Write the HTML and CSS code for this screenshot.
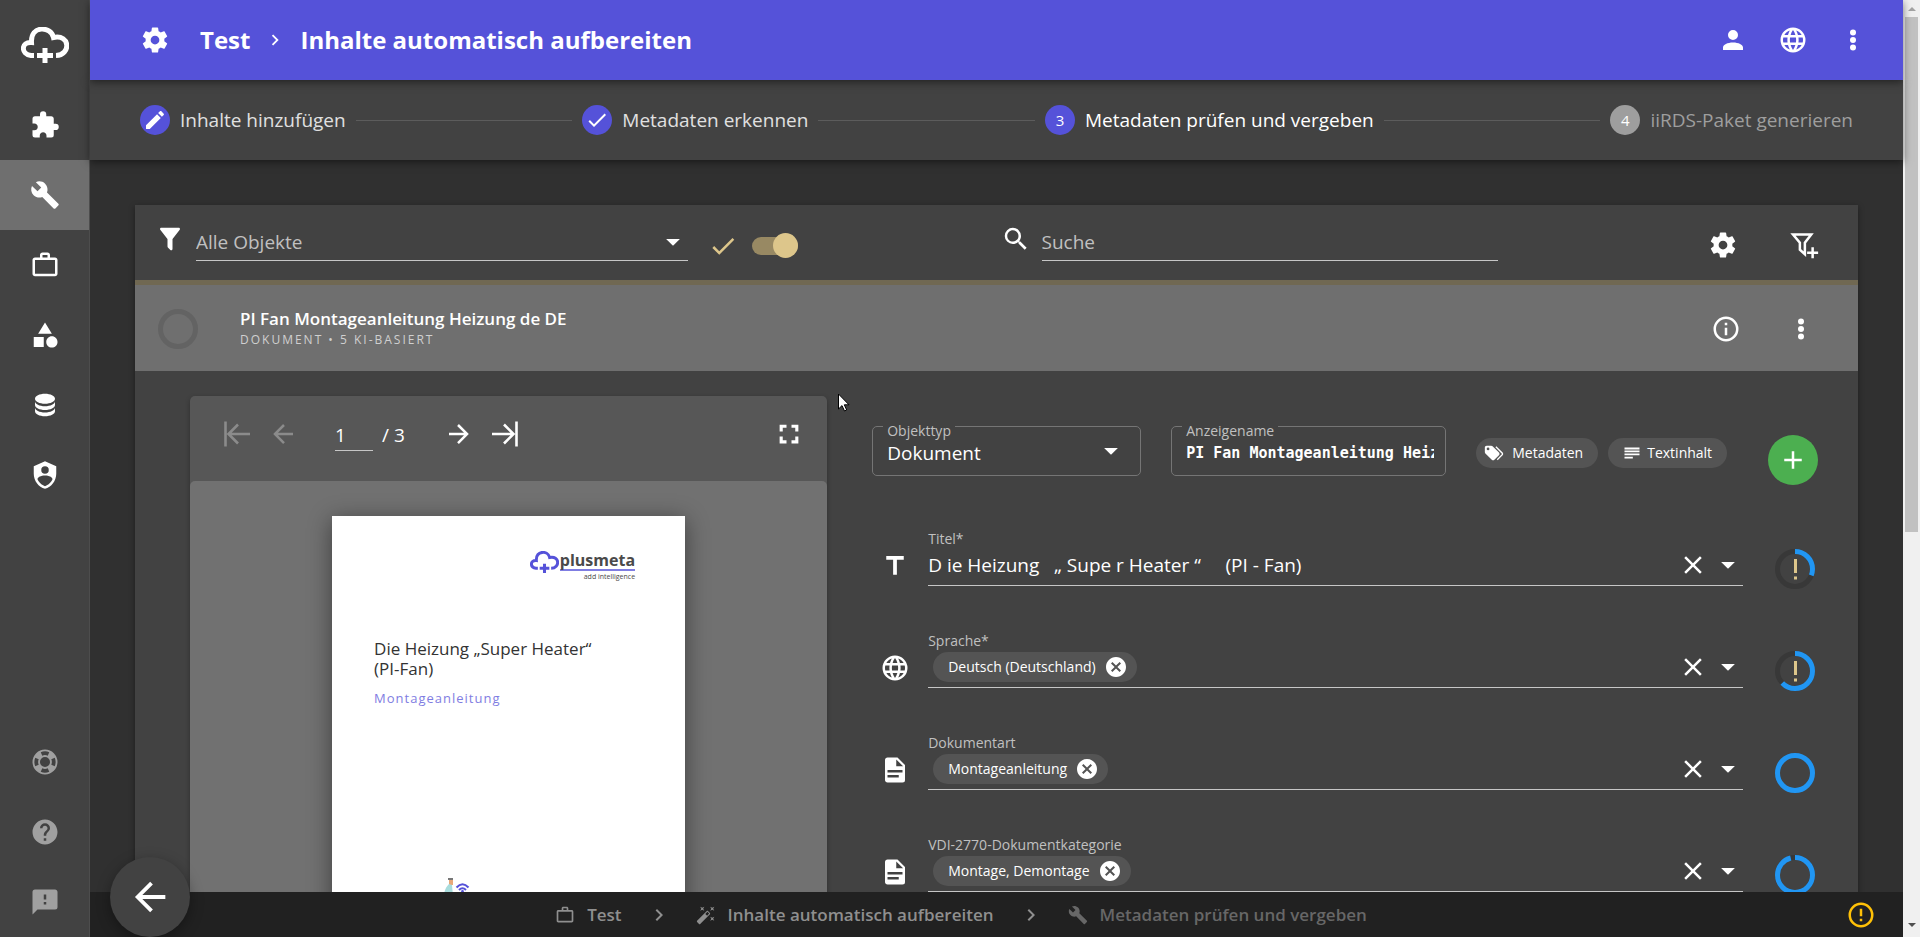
FILE: index.html
```html
<!DOCTYPE html>
<html lang="de">
<head>
<meta charset="utf-8">
<title>Inhalte automatisch aufbereiten</title>
<link rel="stylesheet" href="styles.css">
</head>
<body>
<svg class="sprite" aria-hidden="true">
  <symbol id="cloud" viewBox="0 0 48 36"><path fill="none" stroke="currentColor" stroke-width="5" d="M13 28.500H10C-.5 27 0 14.500 10.500 15.500C9.500-2 30-1 32.500 10.500C49.500 7 50 28 35 28.500"/><path fill="none" stroke="currentColor" stroke-width="5" d="M24 21V36M16 28.500H32"/></symbol>
  <symbol id="cog" viewBox="0 0 24 24"><path d="M12,15.5A3.5,3.5 0 0,1 8.5,12A3.5,3.5 0 0,1 12,8.5A3.5,3.5 0 0,1 15.5,12A3.5,3.5 0 0,1 12,15.5M19.43,12.97C19.47,12.65 19.5,12.33 19.5,12C19.5,11.67 19.47,11.34 19.43,11L21.54,9.37C21.73,9.22 21.78,8.95 21.66,8.73L19.66,5.27C19.54,5.05 19.27,4.96 19.05,5.05L16.56,6.05C16.04,5.66 15.5,5.32 14.87,5.07L14.5,2.42C14.46,2.18 14.25,2 14,2H10C9.75,2 9.54,2.18 9.5,2.42L9.13,5.07C8.5,5.32 7.96,5.66 7.44,6.05L4.95,5.05C4.73,4.96 4.46,5.05 4.34,5.27L2.34,8.73C2.21,8.95 2.27,9.22 2.46,9.37L4.57,11C4.53,11.34 4.5,11.67 4.5,12C4.5,12.33 4.53,12.65 4.57,12.97L2.46,14.63C2.27,14.78 2.21,15.05 2.34,15.27L4.34,18.73C4.46,18.95 4.73,19.03 4.95,18.95L7.44,17.94C7.96,18.34 8.5,18.68 9.13,18.93L9.5,21.58C9.54,21.82 9.75,22 10,22H14C14.25,22 14.46,21.82 14.5,21.58L14.87,18.93C15.5,18.67 16.04,18.34 16.56,17.94L19.05,18.95C19.27,19.03 19.54,18.95 19.66,18.73L21.66,15.27C21.78,15.05 21.73,14.78 21.54,14.63L19.43,12.97Z"/></symbol>
  <symbol id="puzzle" viewBox="0 0 24 24"><path d="M20.5,11H19V7C19,5.89 18.1,5 17,5H13V3.5A2.5,2.5 0 0,0 10.5,1A2.5,2.5 0 0,0 8,3.5V5H4A2,2 0 0,0 2,7V10.8H3.5C5,10.8 6.2,12 6.2,13.5C6.2,15 5,16.2 3.5,16.2H2V20A2,2 0 0,0 4,22H7.8V20.5C7.8,19 9,17.8 10.5,17.8C12,17.8 13.2,19 13.2,20.5V22H17A2,2 0 0,0 19,20V16H20.5A2.5,2.5 0 0,0 23,13.5A2.5,2.5 0 0,0 20.5,11Z"/></symbol>
  <symbol id="wrench" viewBox="0 0 24 24"><path d="M22.7,19L13.6,9.9C14.5,7.6 14,4.9 12.1,3C10.1,1 7.1,0.6 4.7,1.7L9,6L6,9L1.6,4.7C0.4,7.1 0.9,10.1 2.9,12.1C4.8,14 7.5,14.5 9.8,13.6L18.9,22.7C19.3,23.1 19.9,23.1 20.3,22.7L22.6,20.4C23.1,20 23.1,19.3 22.7,19Z"/></symbol>
  <symbol id="briefcase" viewBox="0 0 24 24"><path d="M20,6C20.58,6 21.05,6.2 21.42,6.59C21.8,7 22,7.45 22,8V19C22,19.55 21.8,20 21.42,20.41C21.05,20.8 20.58,21 20,21H4C3.42,21 2.95,20.8 2.58,20.41C2.2,20 2,19.55 2,19V8C2,7.45 2.2,7 2.58,6.59C2.95,6.2 3.42,6 4,6H8V4C8,3.42 8.2,2.95 8.58,2.58C8.95,2.2 9.42,2 10,2H14C14.58,2 15.05,2.2 15.42,2.58C15.8,2.95 16,3.42 16,4V6H20M4,8V19H20V8H4M14,6V4H10V6H14Z"/></symbol>
  <symbol id="shapes" viewBox="0 0 24 24"><path d="M11,13.5V21.5H3V13.5H11M12,2L17.5,11H6.5L12,2M17.5,13C20,13 22,15 22,17.5C22,20 20,22 17.5,22C15,22 13,20 13,17.5C13,15 15,13 17.5,13Z"/></symbol>
  <symbol id="database" viewBox="0 0 24 24"><path d="M12,3C7.58,3 4,4.79 4,7C4,9.21 7.58,11 12,11C16.42,11 20,9.21 20,7C20,4.79 16.42,3 12,3M4,9V12C4,14.21 7.58,16 12,16C16.42,16 20,14.21 20,12V9C20,11.21 16.42,13 12,13C7.58,13 4,11.21 4,9M4,14V17C4,19.21 7.58,21 12,21C16.42,21 20,19.21 20,17V14C20,16.21 16.42,18 12,18C7.58,18 4,16.21 4,14Z"/></symbol>
  <symbol id="shield" viewBox="0 0 24 24"><path d="M12,1L3,5V11C3,16.55 6.84,21.74 12,23C17.16,21.74 21,16.55 21,11V5L12,1M12,5A3,3 0 0,1 15,8A3,3 0 0,1 12,11A3,3 0 0,1 9,8A3,3 0 0,1 12,5M17.13,17C15.92,18.85 14.11,20.24 12,20.92C9.89,20.24 8.08,18.85 6.87,17C6.53,16.5 6.24,16 6,15.47C6,13.82 8.71,12.47 12,12.47C15.29,12.47 18,13.79 18,15.47C17.76,16 17.47,16.5 17.13,17Z"/></symbol>
  <symbol id="lifebuoy" viewBox="0 0 24 24"><path d="M19.79,15.41C20.74,13.24 20.74,10.75 19.79,8.59L17.05,9.83C17.65,11.21 17.65,12.78 17.06,14.17L19.79,15.41M15.42,4.21C13.25,3.26 10.76,3.26 8.59,4.21L9.83,6.94C11.22,6.35 12.79,6.35 14.18,6.95L15.42,4.21M4.21,8.58C3.26,10.76 3.26,13.24 4.21,15.42L6.95,14.17C6.35,12.79 6.35,11.21 6.95,9.82L4.21,8.58M8.59,19.79C10.76,20.74 13.25,20.74 15.42,19.78L14.18,17.05C12.8,17.65 11.22,17.65 9.84,17.06L8.59,19.79M12,2A10,10 0 0,1 22,12A10,10 0 0,1 12,22A10,10 0 0,1 2,12A10,10 0 0,1 12,2M12,8A4,4 0 0,0 8,12A4,4 0 0,0 12,16A4,4 0 0,0 16,12A4,4 0 0,0 12,8Z"/></symbol>
  <symbol id="help" viewBox="0 0 24 24"><path d="M15.07,11.25L14.17,12.17C13.45,12.89 13,13.5 13,15H11V14.5C11,13.39 11.45,12.39 12.17,11.67L13.41,10.41C13.78,10.05 14,9.55 14,9C14,7.89 13.1,7 12,7A2,2 0 0,0 10,9H8A4,4 0 0,1 12,5A4,4 0 0,1 16,9C16,9.88 15.64,10.67 15.07,11.25M13,19H11V17H13M12,2A10,10 0 0,0 2,12A10,10 0 0,0 12,22A10,10 0 0,0 22,12C22,6.47 17.5,2 12,2Z"/></symbol>
  <symbol id="message" viewBox="0 0 24 24"><path d="M13,10H11V6H13M13,14H11V12H13M20,2H4A2,2 0 0,0 2,4V22L6,18H20A2,2 0 0,0 22,16V4C22,2.89 21.1,2 20,2Z"/></symbol>
  <symbol id="account" viewBox="0 0 24 24"><path d="M12,4A4,4 0 0,1 16,8A4,4 0 0,1 12,12A4,4 0 0,1 8,8A4,4 0 0,1 12,4M12,14C16.42,14 20,15.79 20,18V20H4V18C4,15.79 7.58,14 12,14Z"/></symbol>
  <symbol id="web" viewBox="0 0 24 24"><path d="M16.36,14C16.44,13.34 16.5,12.68 16.5,12C16.5,11.32 16.44,10.66 16.36,10H19.74C19.9,10.64 20,11.31 20,12C20,12.69 19.9,13.36 19.74,14M14.59,19.56C15.19,18.45 15.65,17.25 15.97,16H18.92C17.96,17.65 16.43,18.93 14.59,19.56M14.34,14H9.66C9.56,13.34 9.5,12.68 9.5,12C9.5,11.32 9.56,10.65 9.66,10H14.34C14.43,10.65 14.5,11.32 14.5,12C14.5,12.68 14.43,13.34 14.34,14M12,19.96C11.17,18.76 10.5,17.43 10.09,16H13.91C13.5,17.43 12.83,18.76 12,19.96M8,8H5.08C6.03,6.34 7.57,5.06 9.4,4.44C8.8,5.55 8.35,6.75 8,8M5.08,16H8C8.35,17.25 8.8,18.45 9.4,19.56C7.57,18.93 6.03,17.65 5.08,16M4.26,14C4.1,13.36 4,12.69 4,12C4,11.31 4.1,10.64 4.26,10H7.64C7.56,10.66 7.5,11.32 7.5,12C7.5,12.68 7.56,13.34 7.64,14M12,4.03C12.83,5.23 13.5,6.57 13.91,8H10.09C10.5,6.57 11.17,5.23 12,4.03M18.92,8H15.97C15.65,6.75 15.19,5.55 14.59,4.44C16.43,5.07 17.96,6.34 18.92,8M12,2C6.47,2 2,6.5 2,12A10,10 0 0,0 12,22A10,10 0 0,0 22,12A10,10 0 0,0 12,2Z"/></symbol>
  <symbol id="dots" viewBox="0 0 24 24"><circle cx="12" cy="6" r="2.400"/><circle cx="12" cy="12" r="2.400"/><circle cx="12" cy="18" r="2.400"/></symbol>
  <symbol id="chevron" viewBox="0 0 24 24"><path d="M8.59,16.58L13.17,12L8.59,7.41L10,6L16,12L10,18L8.59,16.58Z"/></symbol>
  <symbol id="filter" viewBox="0 0 24 24"><path d="M14,12V19.88C14.04,20.18 13.94,20.5 13.71,20.71C13.32,21.1 12.69,21.1 12.3,20.71L10.29,18.7C10.06,18.47 9.96,18.16 10,17.87V12H9.97L4.21,4.62C3.87,4.19 3.95,3.56 4.38,3.22C4.57,3.08 4.78,3 5,3H19C19.22,3 19.43,3.08 19.62,3.22C20.05,3.56 20.13,4.19 19.79,4.62L14.03,12H14Z"/></symbol>
  <symbol id="filter-plus" viewBox="0 0 24 24"><path fill="none" stroke="currentColor" stroke-width="2" d="M3.200 3.600H17.800L12.700 10.200V19.400L8.700 15.800V10.200ZM18.900 13.700V22.500M14.500 18.100H23.300"/></symbol>
  <symbol id="magnify" viewBox="0 0 24 24"><path d="M9.5,3A6.5,6.5 0 0,1 16,9.5C16,11.11 15.41,12.59 14.44,13.73L14.71,14H15.5L20.5,19L19,20.5L14,15.5V14.71L13.73,14.44C12.59,15.41 11.11,16 9.5,16A6.5,6.5 0 0,1 3,9.5A6.5,6.5 0 0,1 9.5,3M9.5,5C7,5 5,7 5,9.5C5,12 7,14 9.5,14C12,14 14,12 14,9.5C14,7 12,5 9.5,5Z"/></symbol>
  <symbol id="arrow-left" viewBox="0 0 24 24"><path d="M20,11V13H8L13.5,18.5L12.08,19.92L4.16,12L12.08,4.08L13.5,5.5L8,11H20Z"/></symbol>
  <symbol id="arrow-right" viewBox="0 0 24 24"><path d="M4,11V13H16L10.5,18.5L11.92,19.92L19.84,12L11.92,4.08L10.5,5.5L16,11H4Z"/></symbol>
  <symbol id="page-first" viewBox="0 0 30 30"><path fill="none" stroke="currentColor" stroke-width="2.600" d="M3.500 2.500V27.500M28 15H7M16 5.500L6.500 15L16 24.500"/></symbol>
  <symbol id="page-last" viewBox="0 0 30 30"><path fill="none" stroke="currentColor" stroke-width="2.600" d="M26.500 2.500V27.500M2 15H23M14 5.500L23.500 15L14 24.500"/></symbol>
  <symbol id="pencil" viewBox="0 0 24 24"><path d="M20.71,7.04C21.1,6.65 21.1,6 20.71,5.63L18.37,3.29C18,2.9 17.35,2.9 16.96,3.29L15.12,5.12L18.87,8.87M3,17.25V21H6.75L17.81,9.93L14.06,6.18L3,17.25Z"/></symbol>
  <symbol id="check" viewBox="0 0 24 24"><path d="M21,7L9,19L3.5,13.5L4.91,12.09L9,16.17L19.59,5.59L21,7Z"/></symbol>
  <symbol id="info" viewBox="0 0 24 24"><path d="M11,9H13V7H11M12,20C7.59,20 4,16.41 4,12C4,7.59 7.59,4 12,4C16.41,4 20,7.59 20,12C20,16.41 16.41,20 12,20M12,2A10,10 0 0,0 2,12A10,10 0 0,0 12,22A10,10 0 0,0 22,12A10,10 0 0,0 12,2M11,17H13V11H11V17Z"/></symbol>
  <symbol id="alert" viewBox="0 0 24 24"><path d="M11,15H13V17H11V15M11,7H13V13H11V7M12,20C7.59,20 4,16.41 4,12C4,7.59 7.59,4 12,4C16.41,4 20,7.59 20,12C20,16.41 16.41,20 12,20M12,2A10,10 0 0,0 2,12A10,10 0 0,0 12,22A10,10 0 0,0 22,12A10,10 0 0,0 12,2Z"/></symbol>
  <symbol id="close-circle" viewBox="0 0 24 24"><path d="M12,2C17.53,2 22,6.47 22,12C22,17.53 17.53,22 12,22C6.47,22 2,17.53 2,12C2,6.47 6.47,2 12,2M15.59,7L12,10.59L8.41,7L7,8.41L10.59,12L7,15.59L8.41,17L12,13.41L15.59,17L17,15.59L13.41,12L17,8.41L15.59,7Z"/></symbol>
  <symbol id="close" viewBox="0 0 24 24"><path d="M19,6.41L17.59,5L12,10.59L6.41,5L5,6.41L10.59,12L5,17.59L6.41,19L12,13.41L17.59,19L19,17.59L13.41,12L19,6.41Z"/></symbol>
  <symbol id="caret" viewBox="0 0 24 24"><path d="M6.500,9.500H17.500L12,15Z"/></symbol>
  <symbol id="title" viewBox="0 0 24 24"><path d="M5,4V7H10.5V19H13.5V7H19V4H5Z"/></symbol>
  <symbol id="file" viewBox="0 0 24 24"><path d="M13,9H18.5L13,3.5V9M6,2H14L20,8V20A2,2 0 0,1 18,22H6C4.89,22 4,21.1 4,20V4C4,2.89 4.89,2 6,2M15,18V16H6V18H15M18,14V12H6V14H18Z"/></symbol>
  <symbol id="tags" viewBox="0 0 24 24"><path d="M5.5,9A1.5,1.5 0 0,0 7,7.5A1.5,1.5 0 0,0 5.5,6A1.5,1.5 0 0,0 4,7.5A1.5,1.5 0 0,0 5.5,9M17.41,11.58C17.77,11.94 18,12.44 18,13C18,13.55 17.78,14.05 17.41,14.41L12.41,19.41C12.05,19.77 11.55,20 11,20C10.45,20 9.95,19.78 9.58,19.41L2.59,12.42C2.22,12.05 2,11.55 2,11V6C2,4.89 2.89,4 4,4H9C9.55,4 10.05,4.22 10.41,4.58L17.41,11.58M13.54,5.71L14.54,4.71L21.41,11.58C21.78,11.94 22,12.45 22,13C22,13.55 21.78,14.05 21.42,14.41L16.04,19.79L15.04,18.79L20.75,13L13.54,5.71Z"/></symbol>
  <symbol id="text" viewBox="0 0 24 24"><path d="M3 5.500H21V7.700H3ZM3 9H21V11.200H3ZM3 12.500H21V14.700H3ZM3 16.500H13V18.700H3Z"/></symbol>
  <symbol id="plus" viewBox="0 0 24 24"><path d="M19,13H13V19H11V13H5V11H11V5H13V11H19V13Z"/></symbol>
  <symbol id="fullscreen" viewBox="0 0 24 24"><path d="M4.500,4.500H10V7H7V10H4.500V4.500M14,4.500H19.500V10H17V7H14V4.500M17,14H19.500V19.500H14V17H17V14M10,17V19.500H4.500V14H7V17H10Z"/></symbol>
  <symbol id="wand" viewBox="0 0 24 24"><path d="M7.5,5.6L5,7L6.4,4.5L5,2L7.5,3.4L10,2L8.6,4.5L10,7L7.5,5.6M19.5,15.4L22,14L20.6,16.5L22,19L19.5,17.6L17,19L18.4,16.5L17,14L19.5,15.4M22,2L20.6,4.5L22,7L19.5,5.6L17,7L18.4,4.5L17,2L19.5,3.4L22,2M13.34,12.78L15.78,10.34L13.66,8.22L11.22,10.66L13.34,12.78M14.37,7.29L16.71,9.63C17.1,10 17.1,10.65 16.71,11.04L5.04,22.71C4.65,23.1 4,23.1 3.63,22.71L1.29,20.37C0.9,20 0.9,19.35 1.29,18.96L12.96,7.29C13.35,6.9 14,6.9 14.37,7.29Z"/></symbol>
</svg>

<div class="app">
  <nav class="sidebar" aria-label="Hauptmenü">
    <a class="brand" href="#" aria-label="plusmeta"><svg class="brand-logo"><use href="#cloud"/></svg></a>
    <a class="nav-item" href="#" aria-label="Erweiterungen"><svg class="icon"><use href="#puzzle"/></svg></a>
    <a class="nav-item active" href="#" aria-label="Werkzeuge"><svg class="icon"><use href="#wrench"/></svg></a>
    <a class="nav-item" href="#" aria-label="Projekte"><svg class="icon"><use href="#briefcase"/></svg></a>
    <a class="nav-item" href="#" aria-label="Objekte"><svg class="icon"><use href="#shapes"/></svg></a>
    <a class="nav-item" href="#" aria-label="Daten"><svg class="icon"><use href="#database"/></svg></a>
    <a class="nav-item" href="#" aria-label="Verwaltung"><svg class="icon"><use href="#shield"/></svg></a>
    <div class="nav-foot">
      <a class="nav-item muted" href="#" aria-label="Support"><svg class="icon"><use href="#lifebuoy"/></svg></a>
      <a class="nav-item muted" href="#" aria-label="Hilfe"><svg class="icon"><use href="#help"/></svg></a>
      <a class="nav-item muted" href="#" aria-label="Feedback"><svg class="icon"><use href="#message"/></svg></a>
    </div>
  </nav>

  <div class="main">
    <header class="topbar">
      <button class="icon-btn" aria-label="Einstellungen"><svg class="icon"><use href="#cog"/></svg></button>
      <h1 class="crumb-title"><a href="#">Test</a><svg class="crumb-arrow"><use href="#chevron"/></svg><span>Inhalte automatisch aufbereiten</span></h1>
      <div class="top-actions">
        <button class="icon-btn" aria-label="Konto"><svg class="icon"><use href="#account"/></svg></button>
        <button class="icon-btn" aria-label="Sprache wählen"><svg class="icon"><use href="#web"/></svg></button>
        <button class="icon-btn" aria-label="Mehr"><svg class="icon"><use href="#dots"/></svg></button>
      </div>
    </header>

    <ol class="stepper">
      <li class="step"><span class="badge"><svg class="icon-b"><use href="#pencil"/></svg></span>Inhalte hinzufügen</li>
      <li class="rule" aria-hidden="true"></li>
      <li class="step"><span class="badge"><svg class="icon-b"><use href="#check"/></svg></span>Metadaten erkennen</li>
      <li class="rule" aria-hidden="true"></li>
      <li class="step current"><span class="badge">3</span>Metadaten prüfen und vergeben</li>
      <li class="rule" aria-hidden="true"></li>
      <li class="step todo"><span class="badge">4</span>iiRDS-Paket generieren</li>
    </ol>

    <main class="content">
      <section class="card">
        <div class="filters">
          <div class="filter-left">
            <svg class="icon lead"><use href="#filter"/></svg>
            <div class="line-field">
              <select class="plain" aria-label="Objektfilter"><option>Alle Objekte</option></select>
              <svg class="icon"><use href="#caret"/></svg>
            </div>
            <svg class="icon gold"><use href="#check"/></svg>
            <input class="switch" type="checkbox" checked aria-label="Nur geprüfte">
          </div>
          <div class="filter-right">
            <svg class="icon lead"><use href="#magnify"/></svg>
            <div class="line-field"><input class="plain" type="text" placeholder="Suche" aria-label="Suche"></div>
            <button class="icon-btn" aria-label="Einstellungen"><svg class="icon"><use href="#cog"/></svg></button>
            <button class="icon-btn" aria-label="Filter hinzufügen"><svg class="icon"><use href="#filter-plus"/></svg></button>
          </div>
        </div>

        <div class="item-head">
          <span class="item-ring"></span>
          <div class="item-text">
            <h2>PI Fan Montageanleitung Heizung de DE</h2>
            <p>DOKUMENT • 5 KI-BASIERT</p>
          </div>
          <button class="icon-btn" aria-label="Info"><svg class="icon"><use href="#info"/></svg></button>
          <button class="icon-btn" aria-label="Mehr"><svg class="icon"><use href="#dots"/></svg></button>
        </div>

        <div class="item-body">
          <div class="preview">
            <div class="pager">
              <button class="icon-btn" disabled aria-label="Erste Seite"><svg class="icon"><use href="#page-first"/></svg></button>
              <button class="icon-btn" disabled aria-label="Vorige Seite"><svg class="icon"><use href="#arrow-left"/></svg></button>
              <input class="page-no" type="text" value="1" aria-label="Seite">
              <span class="page-count">/ 3</span>
              <button class="icon-btn" aria-label="Nächste Seite"><svg class="icon"><use href="#arrow-right"/></svg></button>
              <button class="icon-btn" aria-label="Letzte Seite"><svg class="icon"><use href="#page-last"/></svg></button>
              <button class="icon-btn full" aria-label="Vollbild"><svg class="icon"><use href="#fullscreen"/></svg></button>
            </div>
            <div class="stage">
              <article class="sheet">
                <div class="sheet-logo">
                  <svg class="sheet-cloud"><use href="#cloud"/></svg>
                  <div class="sheet-brand"><strong>plusmeta</strong><small>add intelligence</small></div>
                </div>
                <h3>Die Heizung „Super Heater“<br>(PI-Fan)</h3>
                <p>Montageanleitung</p>
                <svg class="sheet-art" viewBox="0 0 30 60" aria-hidden="true">
                  <path fill="#e8a878" d="M6 2h4v5H6z"/><path fill="#777" d="M5 0h5v2H5z"/>
                  <path fill="#a8dcdc" d="M6 6C3 9 1 13 1 18V60H10V18L9 7z"/>
                  <path fill="none" stroke="#5552d9" stroke-width="2" d="M13.500 9.500Q19.500 3 25.500 9.500M16 12Q19.500 8.500 23 12"/><circle cx="19.500" cy="13.500" r="1.400" fill="#5552d9"/>
                </svg>
              </article>
            </div>
          </div>

          <form class="form">
            <div class="form-top">
              <div class="outlined type">
                <label for="otype">Objekttyp</label>
                <select class="plain" id="otype"><option>Dokument</option></select>
                <svg class="icon"><use href="#caret"/></svg>
              </div>
              <div class="outlined name">
                <label for="oname">Anzeigename</label>
                <input class="plain mono" id="oname" type="text" value="PI Fan Montageanleitung Heizung de DE">
              </div>
              <div class="chips">
                <button class="chip action" type="button"><svg class="icon-s"><use href="#tags"/></svg>Metadaten</button>
                <button class="chip action wide" type="button"><svg class="icon-xs"><use href="#text"/></svg>Textinhalt</button>
              </div>
              <button class="fab" type="button" aria-label="Hinzufügen"><svg class="icon"><use href="#plus"/></svg></button>
            </div>

            <div class="row">
              <svg class="icon"><use href="#title"/></svg>
              <div class="field">
                <label for="f1">Titel*</label>
                <div class="control">
                  <input class="plain value" id="f1" type="text" value="D ie Heizung   „ Supe r Heater “     (PI - Fan)">
                  <button class="icon-btn" type="button" aria-label="Leeren"><svg class="icon"><use href="#close"/></svg></button>
                  <button class="drop" type="button" aria-label="Öffnen"><svg class="icon"><use href="#caret"/></svg></button>
                </div>
              </div>
              <svg class="ring" viewBox="0 0 40 40"><circle class="track" cx="20" cy="20" r="17.500"/><circle class="bar" cx="20" cy="20" r="17.500" pathLength="100" stroke-dasharray="31 100"/><path class="mark" d="M20.500 10V24M20.500 27.500V30.500"/></svg>
            </div>

            <div class="row">
              <svg class="icon"><use href="#web"/></svg>
              <div class="field">
                <label for="f2">Sprache*</label>
                <div class="control">
                  <span class="chip">Deutsch (Deutschland)<button class="chip-x" type="button" aria-label="Entfernen"><svg class="icon-m"><use href="#close-circle"/></svg></button></span>
                  <input class="plain value" id="f2" type="text">
                  <button class="icon-btn" type="button" aria-label="Leeren"><svg class="icon"><use href="#close"/></svg></button>
                  <button class="drop" type="button" aria-label="Öffnen"><svg class="icon"><use href="#caret"/></svg></button>
                </div>
              </div>
              <svg class="ring" viewBox="0 0 40 40"><circle class="track" cx="20" cy="20" r="17.500"/><circle class="bar" cx="20" cy="20" r="17.500" pathLength="100" stroke-dasharray="63 100"/><path class="mark" d="M20.500 10V24M20.500 27.500V30.500"/></svg>
            </div>

            <div class="row">
              <svg class="icon"><use href="#file"/></svg>
              <div class="field">
                <label for="f3">Dokumentart</label>
                <div class="control">
                  <span class="chip">Montageanleitung<button class="chip-x" type="button" aria-label="Entfernen"><svg class="icon-m"><use href="#close-circle"/></svg></button></span>
                  <input class="plain value" id="f3" type="text">
                  <button class="icon-btn" type="button" aria-label="Leeren"><svg class="icon"><use href="#close"/></svg></button>
                  <button class="drop" type="button" aria-label="Öffnen"><svg class="icon"><use href="#caret"/></svg></button>
                </div>
              </div>
              <svg class="ring" viewBox="0 0 40 40"><circle class="bar" cx="20" cy="20" r="17.500"/></svg>
            </div>

            <div class="row">
              <svg class="icon"><use href="#file"/></svg>
              <div class="field">
                <label for="f4">VDI-2770-Dokumentkategorie</label>
                <div class="control">
                  <span class="chip">Montage, Demontage<button class="chip-x" type="button" aria-label="Entfernen"><svg class="icon-m"><use href="#close-circle"/></svg></button></span>
                  <input class="plain value" id="f4" type="text">
                  <button class="icon-btn" type="button" aria-label="Leeren"><svg class="icon"><use href="#close"/></svg></button>
                  <button class="drop" type="button" aria-label="Öffnen"><svg class="icon"><use href="#caret"/></svg></button>
                </div>
              </div>
              <svg class="ring" viewBox="0 0 40 40"><circle class="track" cx="20" cy="20" r="17.500"/><circle class="bar" cx="20" cy="20" r="17.500" pathLength="100" stroke-dasharray="96 100"/></svg>
            </div>
          </form>
        </div>
      </section>
    </main>

    <footer class="footer">
      <nav class="trail" aria-label="Pfad">
        <a href="#"><svg class="icon-xs"><use href="#briefcase"/></svg>Test</a>
        <svg class="icon-m"><use href="#chevron"/></svg>
        <a href="#"><svg class="icon-xs"><use href="#wand"/></svg>Inhalte automatisch aufbereiten</a>
        <svg class="icon-m"><use href="#chevron"/></svg>
        <a class="here" href="#"><svg class="icon-xs"><use href="#wrench"/></svg>Metadaten prüfen und vergeben</a>
      </nav>
      <button class="icon-btn warn" aria-label="Hinweise"><svg class="icon"><use href="#alert"/></svg></button>
    </footer>
    <button class="back" aria-label="Zurück"><svg class="icon-l"><use href="#arrow-left"/></svg></button>
  </div>

  <div class="scrollbar" aria-hidden="true">
    <span class="arrow up"></span><span class="thumb"></span><span class="arrow down"></span>
  </div>
  <svg class="pointer" viewBox="0 0 12 19" aria-hidden="true"><path fill="#fff" stroke="#000" d="M.5 1V16L4 12.600L6.500 18L8.700 17L6.300 11.800H11Z"/></svg>
</div>
</body>
</html>
```
FILE: styles.css
```css
* { box-sizing: border-box; }

body {
  margin: 0;
  background: #303030;
  color: #fff;
  font: 19px/24px "Open Sans", "Noto Sans", sans-serif;
}

h1, h2, h3, p, ol { margin: 0; padding: 0; font-weight: inherit; }
a { color: inherit; text-decoration: none; }
svg { display: block; flex: none; fill: currentColor; }

button {
  flex: none;
  margin: 0;
  padding: 0;
  border: 0;
  background: none;
  color: inherit;
  font: inherit;
}

.sprite { position: absolute; width: 0; height: 0; }
.icon { width: 30px; height: 30px; }
.icon-xs { width: 20px; height: 20px; }
.icon-s { width: 22px; height: 22px; }
.icon-b { width: 24px; height: 24px; }
.icon-m { width: 24px; height: 24px; }
.icon-l { width: 46px; height: 46px; }

.plain {
  flex: 1;
  min-width: 0;
  width: 100%;
  margin: 0;
  padding: 0;
  border: 0;
  outline: 0;
  background: none;
  color: #fff;
  font: inherit;
  appearance: none;
}

.app { display: flex; height: 100vh; overflow: hidden; }

/* Sidebar */
.sidebar {
  flex: none;
  display: flex;
  flex-direction: column;
  width: 90px;
  border-right: 1px solid #4d4d4d;
  background: #424242;
}
.brand { display: flex; align-items: center; justify-content: center; height: 90px; }
.brand-logo { width: 48px; height: 36px; }
.nav-item { display: flex; align-items: center; justify-content: center; height: 70px; }
.nav-item.active { background: #6f6f6f; }
.nav-item.muted { color: #a0a0a0; }
.nav-foot { margin-top: auto; }

/* Main column */
.main { position: relative; flex: 1; min-width: 0; display: flex; flex-direction: column; }

.topbar {
  z-index: 2;
  flex: none;
  display: flex;
  align-items: center;
  gap: 30px;
  height: 80px;
  padding: 0 35px 0 50px;
  background: #5552d9;
  box-shadow: 0 2px 8px rgba(0, 0, 0, .5);
}
.crumb-title {
  display: flex;
  align-items: center;
  gap: 14px;
  font-size: 24px;
  font-weight: 700;
  line-height: 30px;
}
.crumb-arrow { width: 22px; height: 22px; }
.top-actions { display: flex; gap: 30px; margin-left: auto; }

.stepper {
  z-index: 1;
  flex: none;
  display: flex;
  align-items: center;
  gap: 10px;
  height: 80px;
  padding: 0 50px;
  background: #424242;
  box-shadow: 0 2px 8px rgba(0, 0, 0, .5);
  list-style: none;
}
.step { display: flex; align-items: center; gap: 10px; color: #e0e0e0; white-space: nowrap; }
.step.current { color: #fff; }
.step.todo { color: #9e9e9e; }
.rule { flex: 1; height: 1px; background: #5c5c5c; }
.badge {
  display: flex;
  align-items: center;
  justify-content: center;
  width: 30px;
  height: 30px;
  border-radius: 50%;
  background: #5552d9;
  color: #fff;
  font-size: 15px;
}
.todo .badge { background: #9e9e9e; }

.content { flex: 1; min-height: 0; overflow: hidden; padding: 45px 45px 0; }
.card { background: #424242; box-shadow: 0 2px 6px rgba(0, 0, 0, .4); }

/* Filter bar */
.filters { display: flex; height: 75px; }
.filter-left, .filter-right { display: flex; align-items: center; width: 50%; }
.filter-left { padding: 0 199px 0 20px; }
.filter-right { padding: 0 39px 0 4px; }
.lead { margin: 0 11px 7px 0; }
.line-field {
  flex: 1;
  display: flex;
  align-items: center;
  height: 37px;
  border-bottom: 1px solid #c6c6c6;
}
.line-field .plain, .line-field .plain::placeholder { color: #c0c0c0; opacity: 1; }
.gold { margin: 6px 14px 0 20px; color: #ddc68b; }
.switch {
  flex: none;
  position: relative;
  width: 46px;
  height: 18px;
  margin: 7px 0 0;
  border-radius: 9px;
  background: #988963;
  appearance: none;
}
.switch::after {
  content: "";
  position: absolute;
  top: -4px;
  right: 0;
  width: 25px;
  height: 25px;
  border-radius: 50%;
  background: #ddc68b;
}
.filter-right .icon-btn { margin-top: 5px; }
.line-field + .icon-btn { margin-left: 210px; margin-right: 51px; }

/* Object header */
.item-head {
  display: flex;
  align-items: center;
  height: 91px;
  padding: 2px 42px 0 23px;
  border-top: 5px solid #706852;
  background: #6f6f6f;
}
.item-ring { width: 40px; height: 40px; margin-right: 42px; border: 5px solid #636363; border-radius: 50%; }
.item-text { flex: 1; }
.item-text h2 { font-size: 17px; line-height: 22px; font-weight: 600; }
.item-text p { color: #d0d0d0; font-size: 12px; line-height: 20px; letter-spacing: 2px; }
.item-head .icon-btn + .icon-btn { margin-left: 45px; }

.item-body { display: flex; gap: 45px; padding: 25px 40px 25px 55px; }

/* Document preview */
.preview {
  flex: 0 0 calc(40% - 14px);
  display: flex;
  flex-direction: column;
  border-radius: 5px;
  background: #575757;
  box-shadow: 0 2px 5px rgba(0, 0, 0, .3);
}
.pager { display: flex; align-items: center; height: 85px; padding: 0 23px 9px 32px; }
.pager .icon-btn:disabled { color: #8b8b8b; }
.pager .icon-btn + .icon-btn { margin-left: 16px; }
.page-no {
  width: 38px;
  height: 33px;
  margin: 0 9px 0 37px;
  padding: 2px 0 0;
  border: 0;
  border-bottom: 1px solid #c6c6c6;
  background: none;
  color: #fff;
  font: inherit;
}
.page-count { width: 62px; padding-top: 2px; }
.pager .icon-btn + .full { margin-left: auto; }
.stage { flex: 1; padding-top: 35px; border-radius: 5px; background: #717171; }
.sheet {
  width: 353px;
  height: 500px;
  margin: 0 auto;
  padding: 35px 50px 0 42px;
  background: #fff;
  box-shadow: 0 4px 22px rgba(0, 0, 0, .45);
  color: #333;
}
.sheet-logo { display: flex; justify-content: flex-end; gap: 1px; }
.sheet-cloud { width: 29px; height: 22px; color: #5552d9; }
.sheet-brand { display: flex; flex-direction: column; text-align: right; color: #4a4a4a; }
.sheet-brand strong { border-bottom: 2px solid #7f7de2; font-size: 16px; line-height: 18px; }
.sheet-brand small { font-size: 7px; line-height: 11px; }
.sheet h3 { margin-top: 57px; font-size: 17px; line-height: 20px; white-space: nowrap; }
.sheet p { margin-top: 9px; color: #7f7de2; font-size: 13px; line-height: 20px; letter-spacing: 1px; }
.sheet-art { width: 30px; height: 60px; margin: 170px 0 0 69px; }

/* Metadata form */
.form { flex: 1; min-width: 0; padding-top: 30px; }
.form-top { display: flex; align-items: flex-start; margin-bottom: 44px; }
.outlined {
  position: relative;
  display: flex;
  align-items: center;
  height: 50px;
  margin-right: 30px;
  padding: 4px 14px 0;
  border: 1px solid #757575;
  border-radius: 5px;
}
.outlined label {
  position: absolute;
  top: -6px;
  left: 10px;
  padding: 0 4px;
  background: #424242;
  color: #c0c0c0;
  font-size: 14px;
  line-height: 20px;
}
.outlined .icon { margin-bottom: 4px; }
.type { flex: 0 1 269px; }
.name { flex: 0 1 275px; padding-right: 11px; }
.mono { font: 700 15px/24px "DejaVu Sans Mono", monospace; }
.chips { display: flex; gap: 10px; margin-top: 12px; }
.chip {
  flex: none;
  display: flex;
  align-items: center;
  height: 30px;
  padding: 0 9px 0 15px;
  border-radius: 15px;
  background: #545454;
  font-size: 14px;
  white-space: nowrap;
}
.chip.action { gap: 7px; padding: 0 15px 0 7px; }
.chip.wide { gap: 5px; padding-left: 14px; }
.fab {
  display: flex;
  align-items: center;
  justify-content: center;
  width: 50px;
  height: 50px;
  margin: 9px 0 0 auto;
  border-radius: 50%;
  background: #4caf50;
}

.row { display: flex; align-items: flex-end; height: 60px; margin-bottom: 42px; padding: 0 3px 0 8px; }
.row > .icon { margin: 0 18px 8px 0; }
.field { flex: 1; min-width: 0; margin: 0 32px 3px 0; border-bottom: 1px solid #c6c6c6; }
.field label { display: block; color: #c0c0c0; font-size: 14px; line-height: 20px; }
.control { display: flex; align-items: center; height: 36px; padding-bottom: 4px; }
.control .chip { margin-left: 5px; }
.chip-x { margin-left: 8px; }
.drop { margin-left: 5px; }
.ring { width: 40px; height: 40px; fill: none; stroke-width: 5px; }
.track { stroke: #383838; }
.bar { stroke: #2196f3; transform: rotate(-90deg); transform-origin: 20px 20px; }
.mark { stroke: #ddc68b; stroke-width: 3px; }

/* Footer */
.footer { z-index: 1; flex: none; display: flex; align-items: center; height: 45px; padding-right: 27px; background: #212121; }
.trail {
  flex: 1;
  display: flex;
  align-items: center;
  justify-content: center;
  gap: 25px;
  padding-right: 14px;
  color: #8f8f8f;
  font-size: 17px;
  font-weight: 600;
}
.trail a { display: flex; align-items: center; gap: 12px; }
.trail .here { color: #676767; }
.warn { color: #ffc107; }

.back {
  position: absolute;
  z-index: 2;
  left: 20px;
  bottom: 0;
  display: flex;
  align-items: center;
  justify-content: center;
  width: 80px;
  height: 80px;
  border-radius: 50%;
  background: #424242;
  box-shadow: 0 4px 14px rgba(0, 0, 0, .35);
}

/* Scroll bar */
.scrollbar {
  flex: none;
  display: flex;
  flex-direction: column;
  align-items: center;
  width: 17px;
  background: #f0f0f0;
}
.thumb { width: 13px; height: 55%; background: #c1c1c1; }
.arrow { width: 0; height: 17px; border: 4px solid transparent; border-top-width: 7px; border-bottom-width: 6px; }
.up { height: 11px; margin-bottom: 6px; border-bottom: 4px solid #a3a3a3; }
.down { height: 11px; margin-top: auto; margin-bottom: 3px; border-top: 4px solid #505050; }

.pointer { position: absolute; left: 838px; top: 393px; width: 12px; height: 19px; }
```
